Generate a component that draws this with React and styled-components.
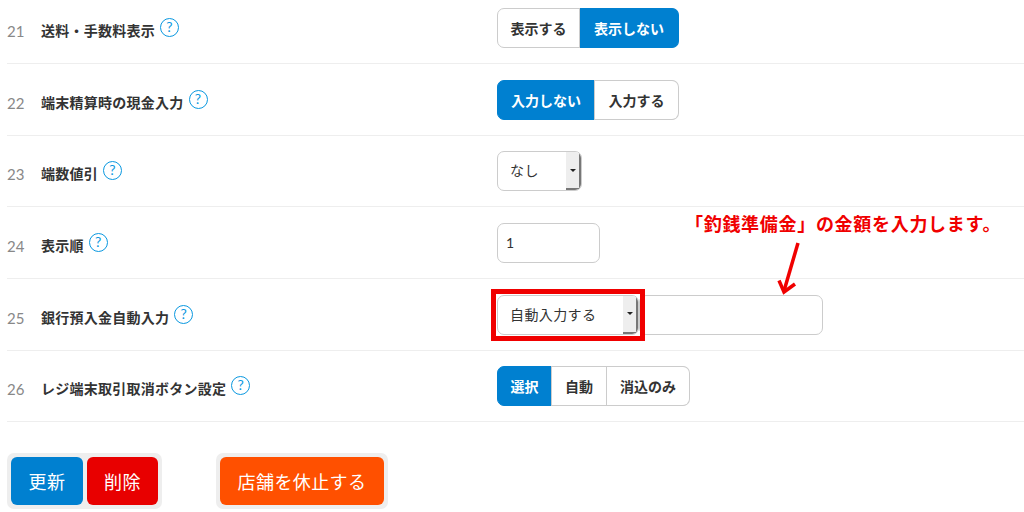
import React from 'react';
import styled, { createGlobalStyle } from 'styled-components';

const Global = createGlobalStyle`
  html, body {
    margin: 0;
    padding: 0;
    background: #fff;
    overflow: hidden;
  }
  body {
    font-family: Lato, "Noto Sans CJK JP", sans-serif;
    color: #333;
  }
`;

const Page = styled.div`
  position: relative;
  width: 1024px;
  height: 512px;
  overflow: hidden;
  padding-left: 7px;
  box-sizing: border-box;
`;

const List = styled.div`
  margin-top: -7.4px;
`;

const Row = styled.div`
  display: grid;
  grid-template-columns: 34px 456px 1fr;
  align-items: start;
  height: 71.6px;
  box-sizing: border-box;
  padding-top: 15.6px;
  border-bottom: 1px solid #eee;
`;

const Num = styled.span`
  font-size: 15px;
  line-height: 20px;
  color: #888;
  margin-top: 13px;
`;

const Label = styled.div`
  display: flex;
  align-items: flex-start;
  gap: 5px;
  font-size: 14px;
  font-weight: 700;
  line-height: 20px;
  letter-spacing: 0.25px;
  color: #333;
  margin-top: 13px;
`;

const Help = styled.span`
  flex: none;
  width: 19px;
  height: 19px;
  margin-top: -3px;
  box-sizing: border-box;
  border: 1.6px solid #0a98e0;
  border-radius: 50%;
  color: #0a98e0;
  font-size: 14px;
  font-weight: 400;
  letter-spacing: 0;
  line-height: 16px;
  text-align: center;
`;

const Controls = styled.div`
  display: flex;
  align-items: flex-start;
`;

const Segments = styled.div`
  display: inline-flex;
  height: 40px;
`;

const Segment = styled.div`
  display: flex;
  align-items: center;
  justify-content: center;
  box-sizing: border-box;
  width: ${({ $w }) => $w}px;
  font-size: 14px;
  font-weight: 700;
  color: ${({ $on }) => ($on ? '#fff' : '#333')};
  background: ${({ $on }) => ($on ? '#0080d0' : '#fff')};
  border: ${({ $on }) => ($on ? '1px solid #0080d0' : '1.5px solid #ccc')};
  border-left-width: ${({ $first }) => ($first ? 1.5 : 0)}px;

  & + & {
    box-shadow: -1px 0 0 #ccc;
  }
  &:first-child {
    border-radius: 7px 0 0 7px;
  }
  &:last-child {
    border-radius: 0 7px 7px 0;
  }
`;

const Select = styled.div`
  position: relative;
  z-index: 1;
  display: flex;
  width: ${({ $w }) => $w}px;
  height: 40px;
  box-sizing: border-box;
  background: #fff;
  border: 1.5px solid #ccc;
  border-radius: 7px;
  overflow: hidden;
`;

const SelectText = styled.span`
  flex: 1;
  padding-left: 12px;
  font-size: 14px;
  line-height: 37px;
  letter-spacing: 0.4px;
  color: #333;
`;

const SelectArrow = styled.span`
  flex: none;
  display: flex;
  align-items: center;
  justify-content: center;
  width: 15px;
  background: #eee;
  border-right: 2px solid #777;
  border-bottom: 2px solid #777;
  box-sizing: border-box;

  &::after {
    content: "";
    border-top: 3px solid #222;
    border-left: 3px solid transparent;
    border-right: 3px solid transparent;
  }
`;

const Marked = styled.div`
  position: relative;
  z-index: 1;
  outline: 5px solid #f00000;
  outline-offset: 1px;
`;

const Input = styled.div`
  width: ${({ $w }) => $w}px;
  height: 40px;
  box-sizing: border-box;
  padding-left: 8px;
  background: #fff;
  border: 1.5px solid #ccc;
  border-radius: 7px;
  font-size: 14px;
  line-height: 38px;
  color: #333;
`;

const Actions = styled.div`
  display: flex;
  gap: 54px;
  margin-top: 30.8px;
`;

const ActionGroup = styled.div`
  display: flex;
  gap: 4px;
  padding: 4px;
  background: #eee;
  border-radius: 7px;
`;

const Action = styled.div`
  display: flex;
  align-items: center;
  justify-content: center;
  width: ${({ $w }) => $w}px;
  height: 48px;
  border-radius: 6px;
  background: ${({ $bg }) => $bg};
  color: #fff;
  font-size: 18px;
  letter-spacing: 0.4px;
`;

const Note = styled.div`
  position: absolute;
  left: 685px;
  top: 212px;
  font-size: 18px;
  font-weight: 700;
  line-height: 24px;
  letter-spacing: 0.7px;
  color: #f00000;
  white-space: nowrap;
`;

const Arrow = styled.svg`
  position: absolute;
  left: 776px;
  top: 238px;
`;

const rows = [
  ['21', '送料・手数料表示', <Segments>
    <Segment $first $w={83}>表示する</Segment>
    <Segment $on $w={99}>表示しない</Segment>
  </Segments>],
  ['22', '端末精算時の現金入力', <Segments>
    <Segment $first $on $w={98}>入力しない</Segment>
    <Segment $w={84}>入力する</Segment>
  </Segments>],
  ['23', '端数値引', <Select $w={85}>
    <SelectText>なし</SelectText>
    <SelectArrow />
  </Select>],
  ['24', '表示順', <Input $w={103}>1</Input>],
  ['25', '銀行預入金自動入力', <>
    <Marked>
      <Select $w={142}>
        <SelectText>自動入力する</SelectText>
        <SelectArrow />
      </Select>
    </Marked>
    <Input $w={184}></Input>
  </>],
  ['26', 'レジ端末取引取消ボタン設定', <Segments>
    <Segment $first $on $w={55}>選択</Segment>
    <Segment $w={55}>自動</Segment>
    <Segment $w={83}>消込のみ</Segment>
  </Segments>],
];

export default function App() {
  return (
    <Page>
      <Global />
      <List>
        {rows.map(([num, label, control]) => (
          <Row key={num}>
            <Num>{num}</Num>
            <Label>{label}<Help>?</Help></Label>
            <Controls>{control}</Controls>
          </Row>
        ))}
      </List>
      <Actions>
        <ActionGroup>
          <Action $w={72} $bg="#0080d0">更新</Action>
          <Action $w={71} $bg="#e80000">削除</Action>
        </ActionGroup>
        <ActionGroup>
          <Action $w={164} $bg="#ff5000">店舗を休止する</Action>
        </ActionGroup>
      </Actions>
      <Note>「釣銭準備金」の金額を入力します。</Note>
      <Arrow width="28" height="58" viewBox="0 0 28 58" fill="none" stroke="#f00000" strokeWidth="3.5">
        <path d="M22 5 L8 53" />
        <path d="M3 42.5 L8 54 L19 46" />
      </Arrow>
    </Page>
  );
}
